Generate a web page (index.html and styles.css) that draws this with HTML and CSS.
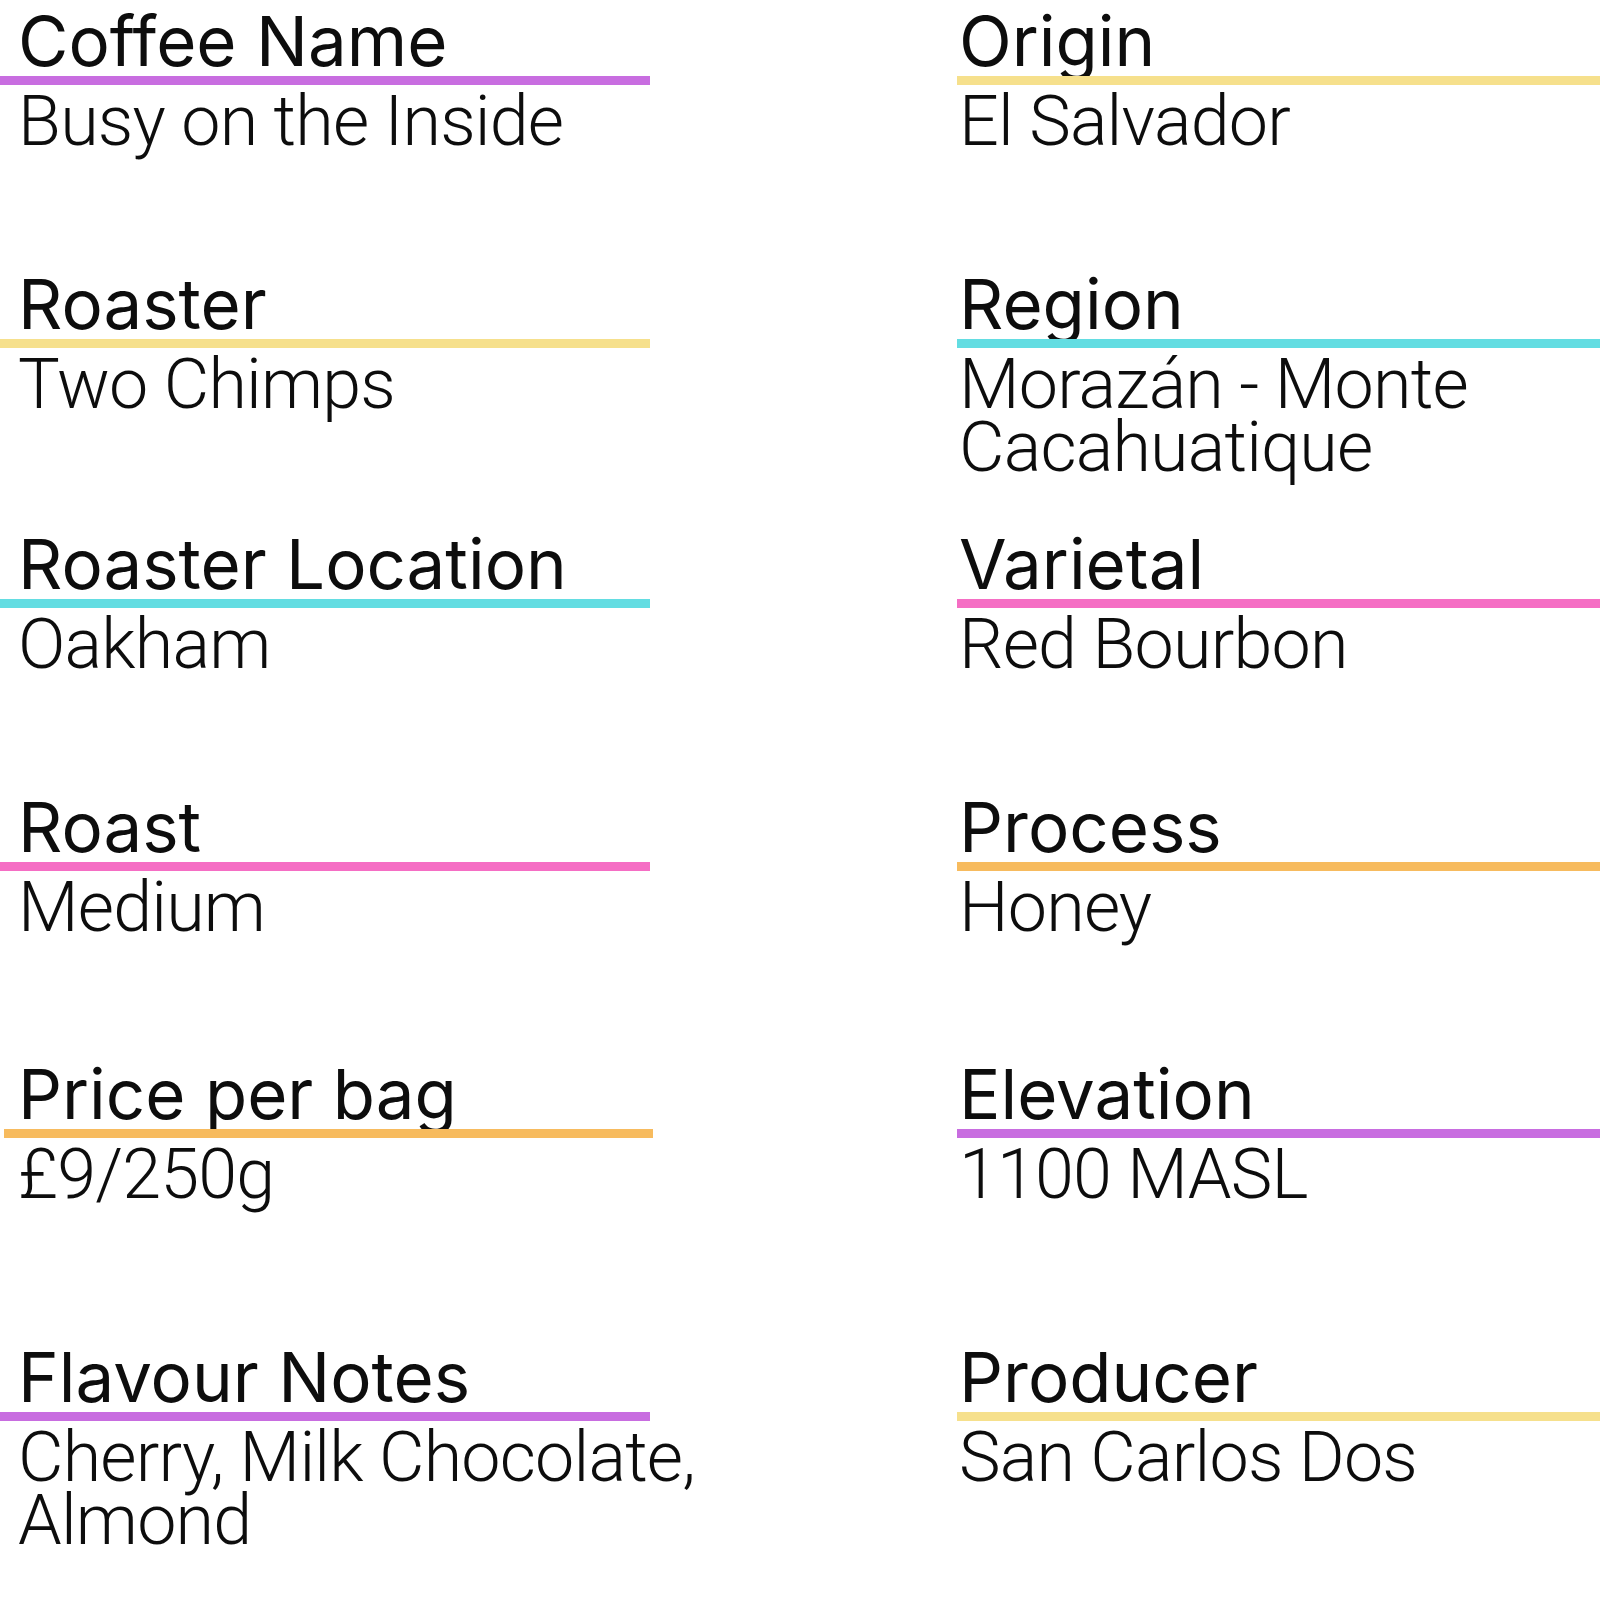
FILE: index.html
```html
<!DOCTYPE html>
<html lang="en">
<head>
<meta charset="utf-8">
<title>Coffee details</title>
<link rel="stylesheet" href="styles.css">
</head>
<body>
<main class="sheet">
  <section class="field left">
    <h2 class="label">Coffee Name</h2>
    <div class="rule purple"></div>
    <p class="value">Busy on the Inside</p>
  </section>
  <section class="field right">
    <h2 class="label">Origin</h2>
    <div class="rule yellow"></div>
    <p class="value">El Salvador</p>
  </section>

  <section class="field left">
    <h2 class="label">Roaster</h2>
    <div class="rule yellow"></div>
    <p class="value">Two Chimps</p>
  </section>
  <section class="field right">
    <h2 class="label">Region</h2>
    <div class="rule cyan"></div>
    <p class="value">Morazán - Monte<br>Cacahuatique</p>
  </section>

  <section class="field left">
    <h2 class="label">Roaster Location</h2>
    <div class="rule cyan"></div>
    <p class="value">Oakham</p>
  </section>
  <section class="field right">
    <h2 class="label">Varietal</h2>
    <div class="rule pink"></div>
    <p class="value">Red Bourbon</p>
  </section>

  <section class="field left">
    <h2 class="label">Roast</h2>
    <div class="rule pink"></div>
    <p class="value">Medium</p>
  </section>
  <section class="field right">
    <h2 class="label">Process</h2>
    <div class="rule orange"></div>
    <p class="value">Honey</p>
  </section>

  <section class="field left">
    <h2 class="label">Price per bag</h2>
    <div class="rule orange inset"></div>
    <p class="value">£9/250g</p>
  </section>
  <section class="field right">
    <h2 class="label">Elevation</h2>
    <div class="rule purple"></div>
    <p class="value">1100 MASL</p>
  </section>

  <section class="field left">
    <h2 class="label">Flavour Notes</h2>
    <div class="rule purple"></div>
    <p class="value">Cherry, Milk Chocolate,<br>Almond</p>
  </section>
  <section class="field right">
    <h2 class="label">Producer</h2>
    <div class="rule yellow"></div>
    <p class="value">San Carlos Dos</p>
  </section>
</main>
</body>
</html>
```

FILE: styles.css
```css
html, body {
  margin: 0;
  padding: 0;
  background: #ffffff;
}

body {
  width: 1600px;
  height: 1600px;
  overflow: hidden;
  font-family: "Inter", "Noto Sans", sans-serif;
  color: #0d0d0d;
}

.sheet {
  display: grid;
  grid-template-columns: 652px 1fr;
  column-gap: 305px;
  grid-template-rows: 263px 260px 263px 267px 283px auto;
}

.field {
  display: flex;
  flex-direction: column;
  min-width: 0;
}

.label {
  margin: 0;
  height: 70px;
  padding-top: 6px;
  font-family: "Inter", "Noto Sans", sans-serif;
  font-size: 69px;
  line-height: 70px;
  font-weight: 400;
  white-space: nowrap;
}

.value {
  margin: 0;
  padding-top: 5px;
  font-family: "Roboto", "Inter", sans-serif;
  font-size: 70px;
  line-height: 63px;
  font-weight: 300;
  letter-spacing: -0.8px;
  white-space: nowrap;
}

.left .label,
.left .value {
  padding-left: 18px;
}

.right .label,
.right .value {
  padding-left: 2px;
}

.rule {
  height: 9px;
  flex: none;
}

.left .rule {
  width: 650px;
}

.right .rule {
  width: 100%;
}

.rule.inset {
  margin-left: 4px;
  width: 649px;
}

.purple { background: #c86de0; }
.yellow { background: #f6e08c; }
.cyan   { background: #63dde2; }
.pink   { background: #f56ec4; }
.orange { background: #f7bb5e; }
```
